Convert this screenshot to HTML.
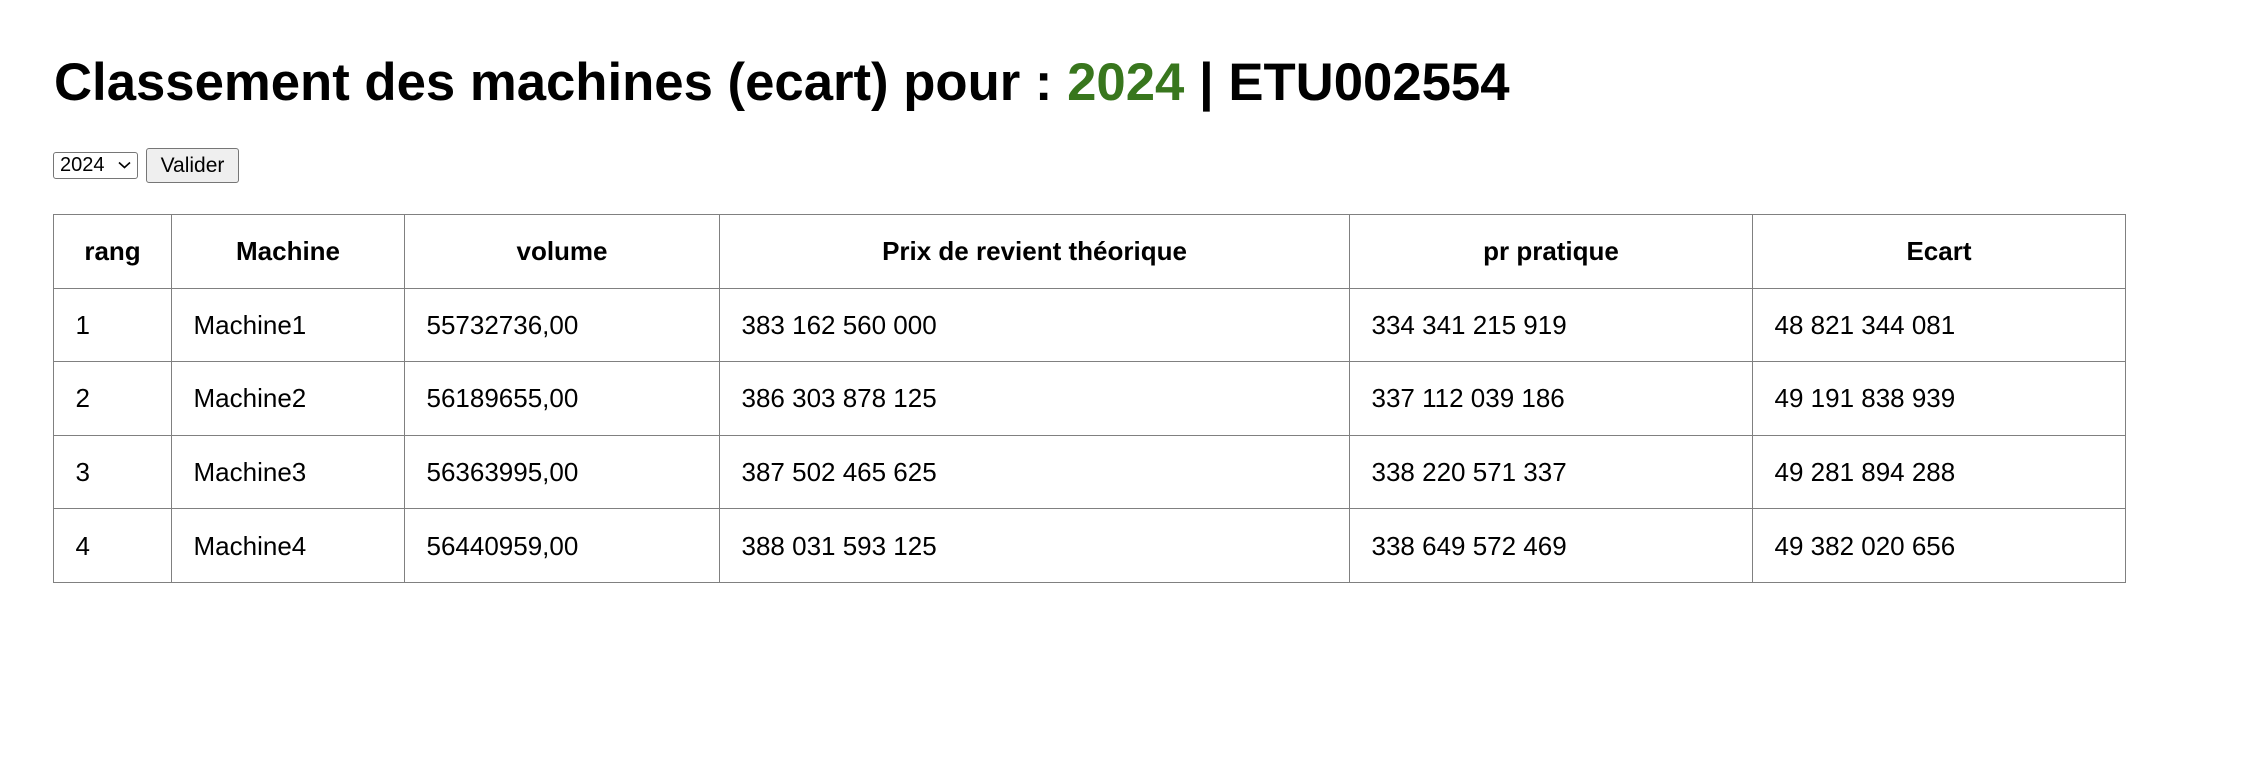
<!DOCTYPE html>
<html><head><meta charset="utf-8"><style>
html,body{margin:0;padding:0;background:#fff;width:2257px;height:759px;overflow:hidden;font-family:"Liberation Sans",Arial,sans-serif;color:#000}
h1{position:absolute;left:54px;top:53px;margin:0;font-size:52.7px;line-height:60px;font-weight:bold;white-space:nowrap}
h1 span{color:#38761d}
.sel{position:absolute;left:53px;top:152px;width:83px;height:25px;border:1px solid #767676;border-radius:3px;font-size:20px;line-height:25px;box-sizing:content-box}
.sel span{position:absolute;left:6px;top:0}
.sel svg{position:absolute;left:64px;top:8px}
.btn{position:absolute;left:146px;top:148px;width:91px;height:33px;border:1px solid #767676;border-radius:3px;background:#efefef;font-size:21px;line-height:33px;text-align:center}
table{position:absolute;left:53px;top:214px;width:2072px;border-collapse:collapse;table-layout:fixed;font-size:26px}
td,th{border:1px solid #808080;height:73.6px;padding:0 0 0 21.5px;vertical-align:middle;text-align:left;line-height:30px;box-sizing:border-box}
th{text-align:center;padding:0;font-weight:bold;font-size:26px}
</style></head><body>
<h1>Classement des machines (ecart) pour : <span>2024</span> | ETU002554</h1>
<div class="sel"><span>2024</span><svg width="13" height="8" viewBox="0 0 13 8"><path d="M1 1.5 L6.5 6.5 L12 1.5" fill="none" stroke="#000" stroke-width="1.6"/></svg></div>
<div class="btn">Valider</div>
<table>
<colgroup><col style="width:118px"><col style="width:233px"><col style="width:315px"><col style="width:630px"><col style="width:403px"><col style="width:373px"></colgroup>
<tr><th>rang</th><th>Machine</th><th>volume</th><th>Prix de revient théorique</th><th>pr pratique</th><th>Ecart</th></tr>
<tr><td>1</td><td>Machine1</td><td>55732736,00</td><td>383 162 560 000</td><td>334 341 215 919</td><td>48 821 344 081</td></tr>
<tr><td>2</td><td>Machine2</td><td>56189655,00</td><td>386 303 878 125</td><td>337 112 039 186</td><td>49 191 838 939</td></tr>
<tr><td>3</td><td>Machine3</td><td>56363995,00</td><td>387 502 465 625</td><td>338 220 571 337</td><td>49 281 894 288</td></tr>
<tr><td>4</td><td>Machine4</td><td>56440959,00</td><td>388 031 593 125</td><td>338 649 572 469</td><td>49 382 020 656</td></tr>
</table>
</body></html>
